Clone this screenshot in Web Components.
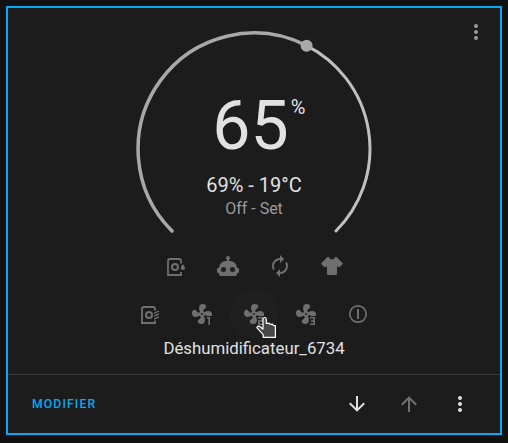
<!DOCTYPE html>
<html lang="fr">
<head>
<meta charset="utf-8">
<title>Déshumidificateur</title>
<style>
html,body{margin:0;height:100%}
body{background:#111;font-family:Roboto,"Noto Sans",sans-serif;color:#e1e1e1;padding:6px 6px 8px;box-sizing:border-box;overflow:hidden}
</style>
</head>
<body>
<card-frame>
  <humidity-card></humidity-card>
  <card-actions slot="actions"></card-actions>
</card-frame>
<script>
const dots='<path d="M12,16A2,2 0 0,1 14,18A2,2 0 0,1 12,20A2,2 0 0,1 10,18A2,2 0 0,1 12,16M12,10A2,2 0 0,1 14,12A2,2 0 0,1 12,14A2,2 0 0,1 10,12A2,2 0 0,1 12,10M12,4A2,2 0 0,1 14,6A2,2 0 0,1 12,8A2,2 0 0,1 10,6A2,2 0 0,1 12,4Z"/>';
const blades='M12,11A1,1 0 0,0 11,12A1,1 0 0,0 12,13A1,1 0 0,0 13,12A1,1 0 0,0 12,11M12.5,2C17,2 17.11,5.57 14.75,6.75C13.76,7.24 13.32,8.29 13.13,9.22C13.61,9.42 14.03,9.73 14.35,10.13C18.05,8.13 22.03,8.92 22.03,12.5C22.03,13.3 21.9,13.8 21.7,14H16.8C16.2,13.5 15.5,13.25 14.79,13.11C14.59,13.59 14.28,14 13.88,14.34C15.87,18.03 15.08,22 11.5,22C7,22 6.91,18.42 9.27,17.24C10.25,16.75 10.69,15.71 10.89,14.79C10.4,14.59 9.97,14.27 9.65,13.87C5.96,15.85 2,15.07 2,11.5C2,7 5.56,6.89 6.74,9.26C7.24,10.25 8.29,10.68 9.22,10.87C9.41,10.39 9.73,9.97 10.14,9.65C8.15,5.96 8.94,2 12.5,2Z';
const fan=mark=>`<path d="${blades}"/><path d="${mark}" fill="none" stroke="currentColor" stroke-width="1.6"/>`;
const cabinet='<path d="M4 22V7Q4 5 6 5H15Q17 5 17 7V9.5M3 21H17V18" fill="none" stroke="currentColor" stroke-width="1.8"/><circle cx="11" cy="13" r="3" fill="none" stroke="currentColor" stroke-width="2"/>';
const icons={
 dots,
 down:'<path d="M11,4H13V16L18.5,10.5L19.92,11.92L12,19.84L4.08,11.92L5.5,10.5L11,16V4Z"/>',
 up:'<path d="M13,20H11V8L5.5,13.5L4.08,12.08L12,4.16L19.92,12.08L18.5,13.5L13,8V20Z"/>',
 humid:cabinet+'<path d="M18.8 10.3C19.7 11.4 21 12.7 21 14A2.1 2.1 0 0 1 16.8 14C16.8 12.7 18 11.4 18.8 10.3Z"/>',
 dry:'<path d="M4 22V7Q4 5 6 5H15Q17 5 17 7V8.5M3 21H17V18.5" fill="none" stroke="currentColor" stroke-width="1.8"/><circle cx="11" cy="13" r="3" fill="none" stroke="currentColor" stroke-width="2"/><path d="M16 11.3L21 9M16 14.2L21 11.9M16 17.1L21 14.8" fill="none" stroke="currentColor" stroke-width="1.3"/>',
 robot:'<path d="M12,2A2,2 0 0,1 14,4C14,4.74 13.6,5.39 13,5.73V7H14A7,7 0 0,1 21,14H22A1,1 0 0,1 23,15V18A1,1 0 0,1 22,19H21V20A2,2 0 0,1 19,22H5A2,2 0 0,1 3,20V19H2A1,1 0 0,1 1,18V15A1,1 0 0,1 2,14H3A7,7 0 0,1 10,7H11V5.73C10.4,5.39 10,4.74 10,4A2,2 0 0,1 12,2M7.5,13A2.5,2.5 0 0,0 5,15.5A2.5,2.5 0 0,0 7.5,18A2.5,2.5 0 0,0 10,15.5A2.5,2.5 0 0,0 7.5,13M16.5,13A2.5,2.5 0 0,0 14,15.5A2.5,2.5 0 0,0 16.5,18A2.5,2.5 0 0,0 19,15.5A2.5,2.5 0 0,0 16.5,13Z"/>',
 renew:'<path d="M12,6V9L16,5L12,1V4A8,8 0 0,0 4,12C4,13.57 4.46,15.03 5.24,16.26L6.7,14.8C6.25,13.97 6,13 6,12A6,6 0 0,1 12,6M18.76,7.74L17.3,9.2C17.74,10.04 18,11 18,12A6,6 0 0,1 12,18V15L8,19L12,23V20A8,8 0 0,0 20,12C20,10.43 19.54,8.97 18.76,7.74Z"/>',
 shirt:'<path d="M16,21H8A1,1 0 0,1 7,20V12.07L5.7,13.07C5.31,13.46 4.68,13.46 4.29,13.07L1.46,10.29C1.07,9.9 1.07,9.27 1.46,8.88L7.34,3H9C9.29,4.8 10.4,5.4 12,5.4C13.6,5.4 14.71,4.8 15,3H16.66L22.54,8.88C22.93,9.27 22.93,9.9 22.54,10.29L19.71,13.12C19.32,13.5 18.69,13.5 18.3,13.12L17,12.12V20A1,1 0 0,1 16,21"/>',
 fan1:fan('M16.8 15.8H19.2V23'),
 fan2:fan('M16 15.8H20.2V19H16.8V22.2H21'),
 fan3:fan('M16 15.8H20.2V22.2H16M17 19H20.2'),
 power:'<circle cx="12" cy="12" r="8.2" fill="none" stroke="currentColor" stroke-width="1.7"/><path d="M11 7H13V17H11Z"/>'
};
const define=(name,html,setup)=>customElements.define(name,class extends HTMLElement{
  constructor(){super();this.attachShadow({mode:'open'})}
  connectedCallback(){this.shadowRoot.innerHTML=html;if(setup)setup(this)}
});

define('icon-button',`<style>
:host{display:grid;place-items:center;width:48px;height:48px;border-radius:50%;flex:none}
:host([hovered]){background:#1f1f1f}
svg{display:block;width:24px;height:24px;fill:currentColor}
</style><svg viewBox="0 0 24 24" aria-hidden="true"></svg>`,
 el=>el.shadowRoot.querySelector('svg').innerHTML=icons[el.getAttribute('icon')]);

define('card-frame',`<style>
:host{display:flex;flex-direction:column;box-sizing:border-box;height:429px;border:2px solid #03a9f4;background:#1c1c1c}
</style><slot></slot><slot name="actions"></slot>`);

define('humidity-gauge',`<style>
:host{display:grid;width:240px;height:213px;justify-items:center}
svg,.info{grid-area:1/1}
svg{width:240px;height:213px}
.info{display:flex;flex-direction:column;align-items:center;padding-top:57px;white-space:nowrap}
.target{display:flex;font-size:68px;line-height:80px;font-weight:400;padding-left:12px}
.unit{font-size:20px;line-height:24px;padding-top:9px;margin-left:2px;width:17px}
.current{font-size:20px;line-height:24px;margin-top:7px}
.mode{font-size:16px;line-height:24px;color:#9b9b9b}
</style>
<svg viewBox="134 29 240 213" fill="none" stroke-linecap="round" aria-hidden="true">
<path d="M306.6 45.6A116 116 0 0 1 336 231" stroke="#c0c0c0" stroke-width="3"/>
<path d="M172 231A116 116 0 0 1 306.6 45.6" stroke="#a8a8a8" stroke-width="3.5"/>
<circle cx="306.6" cy="45.7" r="6" fill="#a8a8a8"/>
</svg>
<div class="info"><div class="target"><span>65</span><span class="unit">%</span></div>
<div class="current">69% - 19°C</div><div class="mode">Off - Set</div></div>`);

define('mode-row',`<style>:host{display:flex;justify-content:center;gap:4px;color:#6f6f6f}</style><slot></slot>`);

define('hand-cursor',`<style>
:host{position:absolute;left:24px;top:26px;width:24px;height:26px}svg{display:block}
</style><svg width="24" height="26" viewBox="0 0 24 26" aria-hidden="true">
<path d="M9 13.5V3.4Q9 1.5 10.6 1.5T12.3 3.4V7.4L15 7.2L16.2 8.4L18.4 8.2L19.4 9.4L21.4 9.6V21.4H9.2V18.6L2.8 11.6Q3.4 9.8 5.6 10.3L9 13.2" fill="#484848" stroke="#fff" stroke-width="1.2" stroke-linejoin="round"/></svg>`);

define('humidity-card',`<style>
:host{display:flex;flex-direction:column;align-items:center;position:relative;height:366px;box-sizing:border-box;padding-top:21px}
.more{position:absolute;top:0;right:0;color:#9b9b9b}
.hover{position:relative}
.name{font-size:16.8px;line-height:20px;white-space:nowrap}
</style>
<humidity-gauge></humidity-gauge>
<mode-row><icon-button icon="humid"></icon-button><icon-button icon="robot"></icon-button><icon-button icon="renew"></icon-button><icon-button icon="shirt"></icon-button></mode-row>
<mode-row><icon-button icon="dry"></icon-button><icon-button icon="fan1"></icon-button><div class="hover"><icon-button icon="fan2" hovered></icon-button><hand-cursor></hand-cursor></div><icon-button icon="fan3"></icon-button><icon-button icon="power"></icon-button></mode-row>
<div class="name">Déshumidificateur_6734</div>
<icon-button class="more" icon="dots"></icon-button>`);

define('card-actions',`<style>
:host{display:flex;align-items:center;height:58px;border-top:1px solid #383838;padding:0 16px 0 24px}
.edit{margin-right:auto;color:#03a9f4;font-size:12.25px;font-weight:500;line-height:16px;padding-bottom:1px;letter-spacing:1.1px}
.tools{display:flex;gap:4px}.off{color:#6f6f6f}.menu{margin-left:-1px}
</style><span class="edit">MODIFIER</span>
<div class="tools"><icon-button icon="down"></icon-button><icon-button class="off" icon="up"></icon-button><icon-button class="menu" icon="dots"></icon-button></div>`);
</script>
</body>
</html>
